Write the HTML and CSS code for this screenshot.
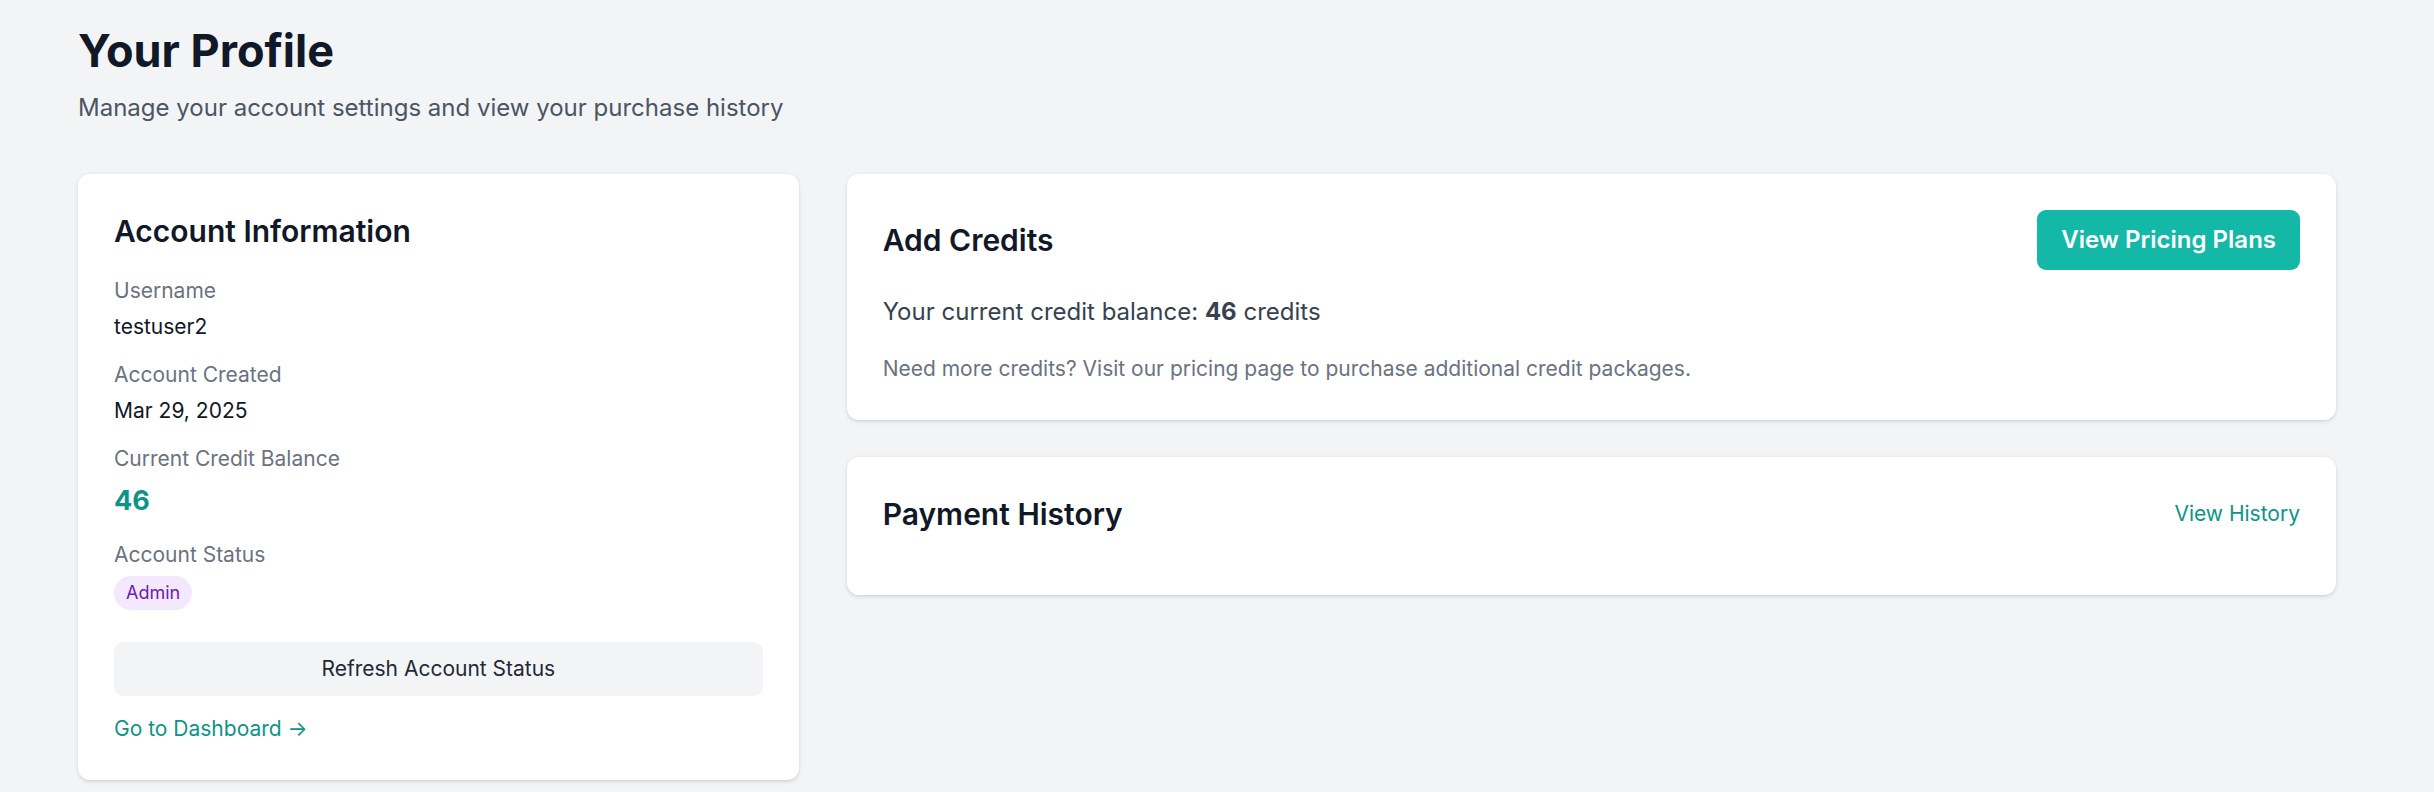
FILE: index.html
```html
<!DOCTYPE html>
<html lang="en">
<head>
<meta charset="utf-8">
<title>Your Profile</title>
<link rel="stylesheet" href="styles.css">
</head>
<body>
<main class="page">
  <header class="page-head">
    <h1 class="page-title">Your Profile</h1>
    <p class="page-sub">Manage your account settings and view your purchase history</p>
  </header>
  <div class="grid">
    <section class="card account">
      <h2 class="card-title">Account Information</h2>
      <div class="fields">
        <div class="field">
          <div class="label">Username</div>
          <div class="value">testuser2</div>
        </div>
        <div class="field">
          <div class="label">Account Created</div>
          <div class="value">Mar 29, 2025</div>
        </div>
        <div class="field">
          <div class="label">Current Credit Balance</div>
          <div class="value-big">46</div>
        </div>
        <div class="field">
          <div class="label">Account Status</div>
          <span class="badge">Admin</span>
        </div>
      </div>
      <button class="btn-refresh" type="button">Refresh Account Status</button>
      <a class="link-dash" href="#">Go to Dashboard →</a>
    </section>
    <div class="right-col">
      <section class="card">
        <div class="card-head">
          <h2 class="card-title">Add Credits</h2>
          <a class="btn-primary" href="#">View Pricing Plans</a>
        </div>
        <p class="balance">Your current credit balance: <strong>46</strong> credits</p>
        <p class="note">Need more credits? Visit our pricing page to purchase additional credit packages.</p>
      </section>
      <section class="card">
        <div class="card-head">
          <h2 class="card-title">Payment History</h2>
          <a class="link-history" href="#">View History</a>
        </div>
      </section>
    </div>
  </div>
</main>
</body>
</html>
```

FILE: styles.css
```css
* { box-sizing: border-box; }
html, body { margin: 0; padding: 0; }
body {
  background: #f3f4f6;
  font-family: Inter, "Noto Sans", "Liberation Sans", sans-serif;
  color: #111827;
}
.page {
  padding: 24px 98px 8px 78px;
}
.page-head { margin-bottom: 48px; }
.page-title {
  margin: 0;
  font-size: 45px;
  line-height: 54px;
  font-weight: 700;
  color: #111827;
}
.page-sub {
  margin: 12px 0 0;
  font-size: 24px;
  line-height: 36px;
  color: #4b5563;
}
.grid {
  display: grid;
  grid-template-columns: repeat(3, minmax(0, 1fr));
  gap: 48px;
  align-items: start;
}
.right-col {
  grid-column: span 2;
  display: flex;
  flex-direction: column;
  gap: 37px;
}
.card {
  background: #fff;
  border-radius: 12px;
  box-shadow: 0 1.5px 4.5px rgba(0,0,0,0.1), 0 1.5px 3px -1.5px rgba(0,0,0,0.1);
  padding: 36px;
}
.account .card-title { margin-bottom: 24px; }
.card-title {
  margin: 0;
  font-size: 30px;
  line-height: 42px;
  font-weight: 600;
  color: #111827;
}
.fields {
  display: flex;
  flex-direction: column;
  gap: 18px;
}
.label {
  font-size: 21px;
  line-height: 30px;
  color: #6b7280;
}
.value {
  margin-top: 6px;
  font-size: 21px;
  line-height: 30px;
  color: #111827;
}
.value-big {
  margin-top: 6px;
  font-size: 27px;
  line-height: 42px;
  font-weight: 700;
  color: #0d9488;
}
.badge {
  display: inline-block;
  margin-top: 6px;
  padding: 5px 12px;
  border-radius: 999px;
  background: #f3e8ff;
  color: #6b21a8;
  font-size: 18px;
  line-height: 24px;
}
.btn-refresh {
  display: block;
  width: 100%;
  margin-top: 32px;
  padding: 12px 24px;
  border: 0;
  border-radius: 9px;
  background: #f3f4f6;
  color: #1f2937;
  font-family: inherit;
  font-size: 21px;
  line-height: 30px;
  text-align: center;
}
.link-dash {
  display: block;
  margin-top: 18px;
  font-size: 21px;
  line-height: 30px;
  color: #0d9488;
  text-decoration: none;
}
.card-head {
  display: flex;
  justify-content: space-between;
  align-items: center;
  margin-bottom: 24px;
}
.btn-primary {
  display: inline-block;
  padding: 12px 24px;
  border-radius: 9px;
  background: #14b8a6;
  color: #fff;
  font-size: 24px;
  line-height: 36px;
  font-weight: 600;
  text-decoration: none;
}
.balance {
  margin: 0;
  font-size: 24px;
  line-height: 36px;
  color: #374151;
}
.balance strong { font-weight: 700; }
.note {
  margin: 24px 0 0;
  font-size: 21px;
  line-height: 30px;
  color: #6b7280;
}
.link-history {
  font-size: 21px;
  line-height: 30px;
  color: #0d9488;
  text-decoration: none;
}
```
